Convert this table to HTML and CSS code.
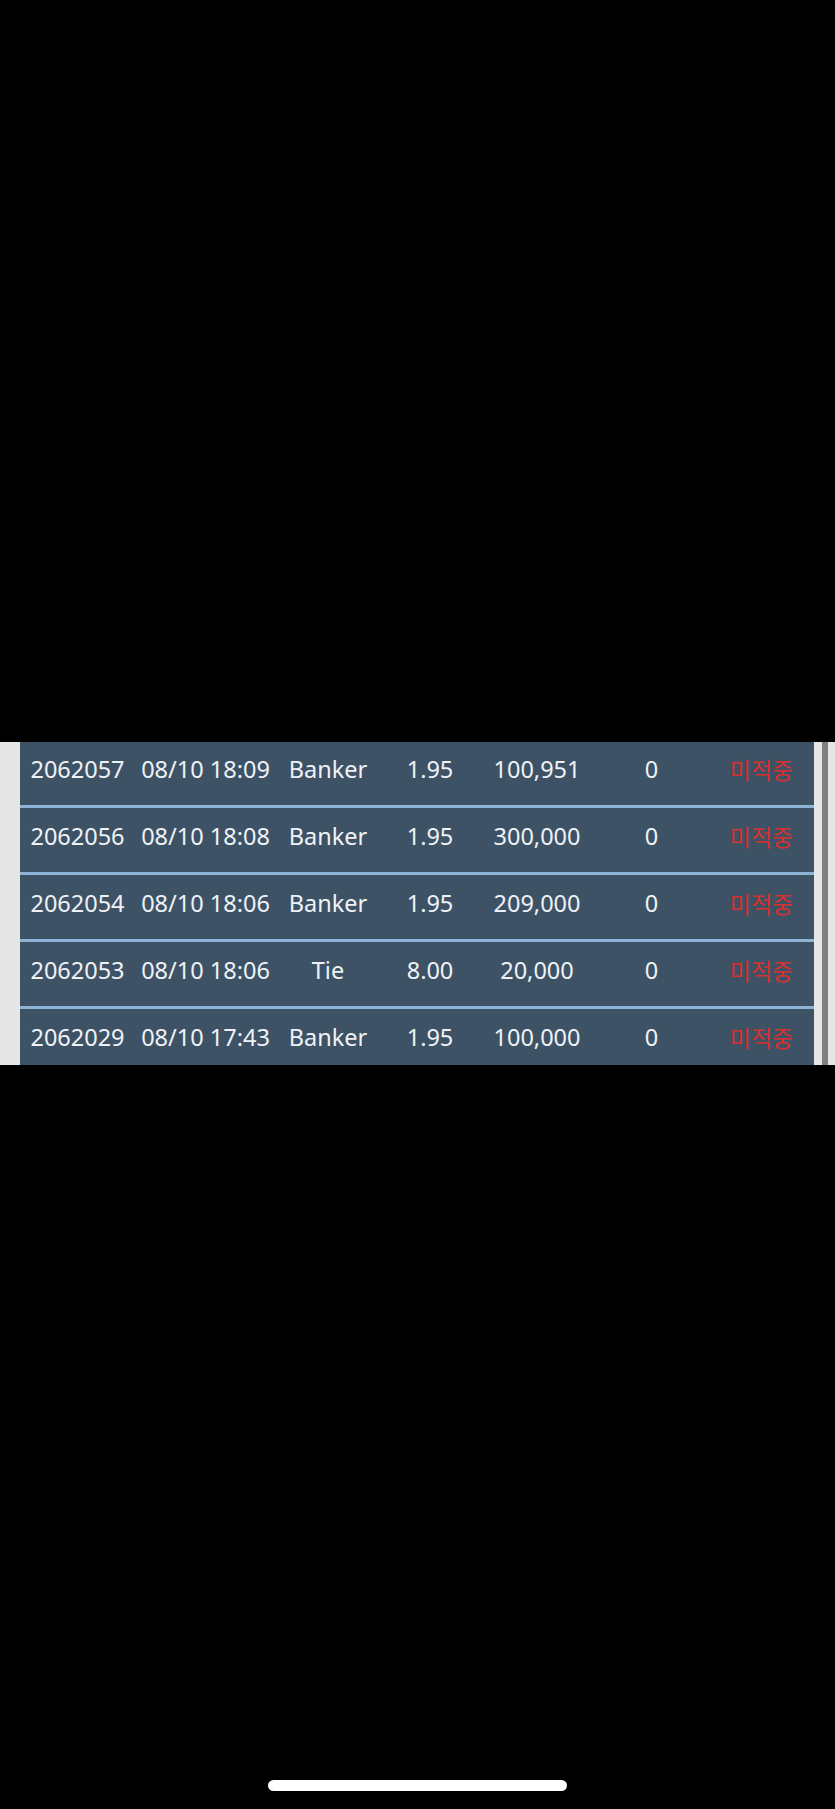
FILE: index.html
```html
<!DOCTYPE HTML>
<html>
<head>
    <meta charset="utf-8">
    <title>Bet history</title>
    <link rel="stylesheet" href="styles.css">
</head>
<body>

<div class="top-space"></div>

<div class="frame">
    <div class="gutter"></div>
    <div class="history">
        <div class="rows">
            <div class="row">
                <span>2062057</span><span>08/10 18:09</span><span>Banker</span><span>1.95</span><span>100,951</span><span>0</span><span class="miss">미적중</span>
            </div>
            <div class="row">
                <span>2062056</span><span>08/10 18:08</span><span>Banker</span><span>1.95</span><span>300,000</span><span>0</span><span class="miss">미적중</span>
            </div>
            <div class="row">
                <span>2062054</span><span>08/10 18:06</span><span>Banker</span><span>1.95</span><span>209,000</span><span>0</span><span class="miss">미적중</span>
            </div>
            <div class="row">
                <span>2062053</span><span>08/10 18:06</span><span>Tie</span><span>8.00</span><span>20,000</span><span>0</span><span class="miss">미적중</span>
            </div>
            <div class="row">
                <span>2062029</span><span>08/10 17:43</span><span>Banker</span><span>1.95</span><span>100,000</span><span>0</span><span class="miss">미적중</span>
            </div>
        </div>
    </div>
    <div class="scrollbar">
        <div class="track"></div>
        <div class="thumb"></div>
        <div class="track edge"></div>
    </div>
</div>

<div class="home-bar"></div>

</body>
</html>
```

FILE: styles.css
```css
body, html {
    margin: 0;
    padding: 0;
    background: #000;
}

body {
    width: 835px;
    height: 1809px;
    overflow: hidden;
    font-family: "Noto Sans", "Noto Sans CJK KR", sans-serif;
}

.top-space {
    height: 742px;
}

.frame {
    display: flex;
    height: 323px;
}

.gutter {
    width: 20px;
    background: #e6e6e6;
}

.history {
    width: 794px;
    overflow: hidden;
    background: #3e5266;
}

.rows {
    margin-top: -1px;
}

.row {
    display: grid;
    grid-template-columns: 115px 141px 104px 100px 114px 115px 105px;
    height: 67px;
    padding-top: 12px;
    box-sizing: border-box;
    border-bottom: 3px solid #8db4d6;
    color: #eef2f6;
    font-size: 23.5px;
    line-height: 32px;
    text-align: center;
    white-space: nowrap;
}

.row .miss {
    color: #d92f2f;
    font-family: "Noto Sans CJK KR", sans-serif;
    font-size: 23px;
}

.scrollbar {
    display: flex;
    width: 21px;
}
.scrollbar .track {
    width: 8px;
    background: #e6e6e6;
}
.scrollbar .track.edge {
    width: 7px;
}
.scrollbar .thumb {
    width: 6px;
    background: #808080;
}

.home-bar {
    width: 299px;
    height: 11px;
    margin: 715px 0 0 268px;
    border-radius: 6px;
    background: #fff;
}
```
